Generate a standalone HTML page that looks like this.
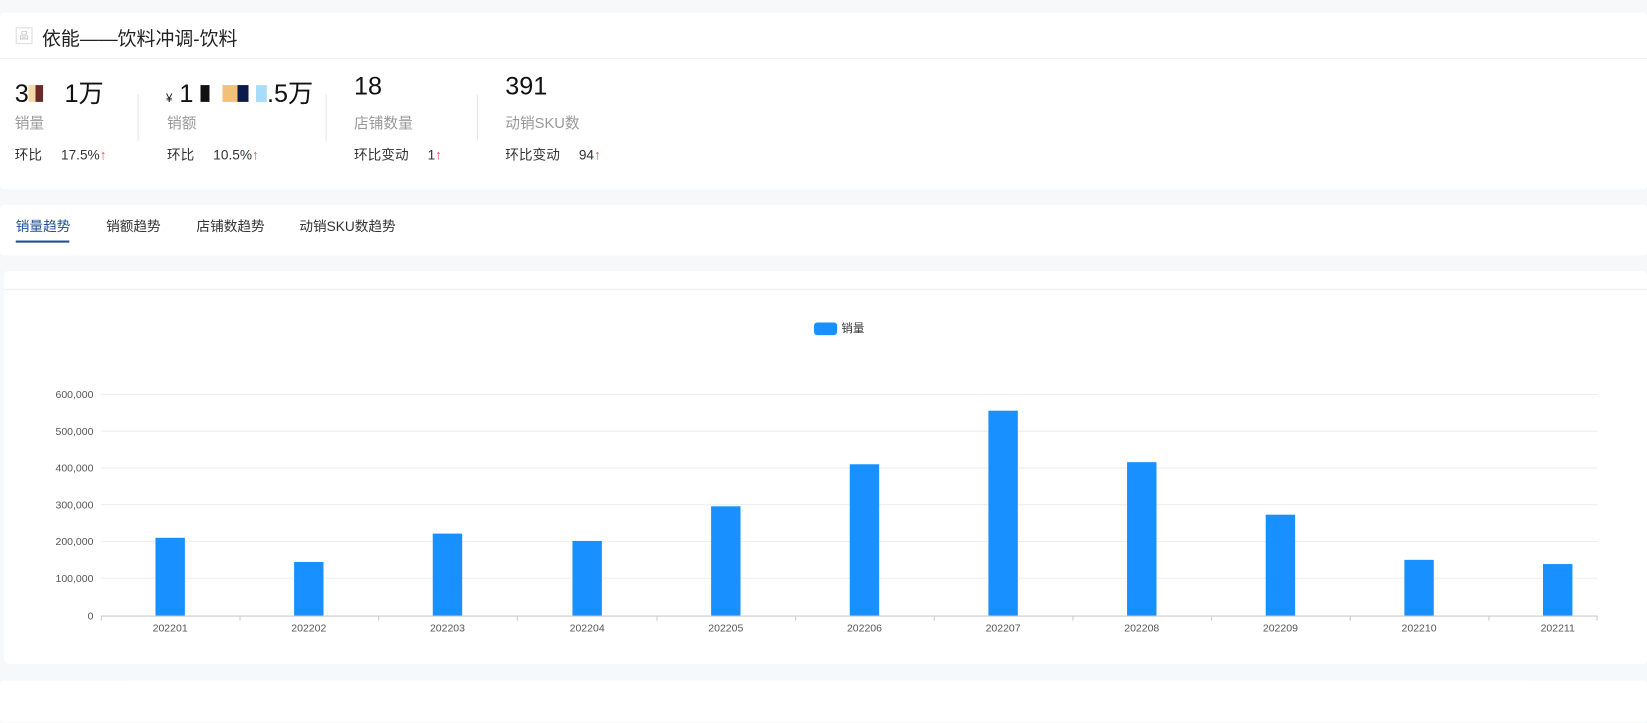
<!DOCTYPE html>
<html><head><meta charset="utf-8">
<style>
*{margin:0;padding:0;box-sizing:border-box}
html,body{width:1647px;height:683px;overflow:hidden}
body{background:#f7f8fa;font-family:"Liberation Sans","Noto Sans CJK SC",sans-serif;color:#333}
#w{position:absolute;left:0;top:0;width:1568px;height:651px;transform:scale(1.05038);transform-origin:0 0}
.a{position:absolute}
.card{position:absolute;background:#fff;left:0;right:0;border-radius:4px}
.big{font-size:24px;color:#111;top:69px}
.lbl{font-size:14px;color:#999;top:107px}
.hb{font-size:13px;color:#333;top:137px}
.up{color:#e05a5a}
.sep{position:absolute;top:90px;width:1px;height:44px;background:#e5e5e5}
.tab{font-size:13px;color:#333;top:205px}
</style></head><body><div id="w">
<div class="card" style="top:12px;height:168px">
  <div class="a" style="left:15px;top:14px;width:16px;height:16px;border:1px solid #ddd;font-size:9px;color:#bbb;text-align:center;line-height:14px">品</div>
  <div class="a" style="left:40px;top:11px;font-size:18px;color:#222">依能——饮料冲调-饮料</div>
  <div class="a" style="left:0;right:0;top:43px;height:1px;background:#eee"></div>
</div>
<div class="a big" style="left:14px">3<span style="display:inline-block;width:14px;height:16px;background:linear-gradient(90deg,#f3d9a8 50%,#6b2a2a 50%)"></span>&nbsp;&nbsp;&nbsp;1万</div>
<div class="a lbl" style="left:14px">销量</div>
<div class="a hb" style="left:14px">环比&nbsp;&nbsp;&nbsp;&nbsp;&nbsp;17.5%<span class="up">↑</span></div>
<div class="sep" style="left:131px"></div>
<div class="a big" style="left:158px"><span style="font-size:11px">¥</span> 1<span style="display:inline-block;width:70px;height:16px;background:linear-gradient(90deg,#fff 10%,#111 10%,#111 22%,#fff 22%,#fff 40%,#f3c07a 40%,#f3c07a 60%,#0a1a4a 60%,#0a1a4a 75%,#fff 75%,#fff 85%,#a8ddf8 85%)"></span>.5万</div>
<div class="a lbl" style="left:159px">销额</div>
<div class="a hb" style="left:159px">环比&nbsp;&nbsp;&nbsp;&nbsp;&nbsp;10.5%<span class="up">↑</span></div>
<div class="sep" style="left:310px"></div>
<div class="a big" style="left:337px">18</div>
<div class="a lbl" style="left:337px">店铺数量</div>
<div class="a hb" style="left:337px">环比变动&nbsp;&nbsp;&nbsp;&nbsp;&nbsp;1<span class="up">↑</span></div>
<div class="sep" style="left:454px"></div>
<div class="a big" style="left:481px">391</div>
<div class="a lbl" style="left:481px">动销SKU数</div>
<div class="a hb" style="left:481px">环比变动&nbsp;&nbsp;&nbsp;&nbsp;&nbsp;94<span class="up">↑</span></div>

<div class="card" style="top:195px;height:48px"></div>
<div class="a tab" style="left:15px;color:#1d4f91">销量趋势</div>
<div class="a" style="left:15px;top:229px;width:51px;height:2px;background:#1d4f91"></div>
<div class="a tab" style="left:101px">销额趋势</div>
<div class="a tab" style="left:187px">店铺数趋势</div>
<div class="a tab" style="left:285px">动销SKU数趋势</div>

<div class="card" style="top:258px;height:374px;left:4px">
  <div class="a" style="left:0;right:0;top:17px;height:1px;background:#eee"></div>
</div>
<div class="card" style="top:648px;height:40px"></div>
<svg class="a" style="left:0;top:0" width="1568" height="651" font-family="Liberation Sans, sans-serif">
  <rect x="775" y="307" width="22" height="12" rx="3" fill="#1890ff"/>
  <text x="801" y="316" font-size="11" fill="#333" font-family="Liberation Sans, Noto Sans CJK SC, sans-serif">销量</text>
  <g stroke="#eee" stroke-width="1">
    <line x1="96" x2="1521" y1="375.5" y2="375.5"/>
    <line x1="96" x2="1521" y1="410.5" y2="410.5"/>
    <line x1="96" x2="1521" y1="445.5" y2="445.5"/>
    <line x1="96" x2="1521" y1="480.5" y2="480.5"/>
    <line x1="96" x2="1521" y1="515.5" y2="515.5"/>
    <line x1="96" x2="1521" y1="550.5" y2="550.5"/>
  </g>
  <line x1="96" x2="1521" y1="586.5" y2="586.5" stroke="#ccc"/>
  <g font-size="10" fill="#555" text-anchor="end">
    <text x="89" y="379">600,000</text><text x="89" y="414">500,000</text><text x="89" y="449">400,000</text>
    <text x="89" y="484">300,000</text><text x="89" y="519">200,000</text><text x="89" y="554">100,000</text><text x="89" y="590">0</text>
  </g>
  <g fill="#1890ff">
    <rect x="148" y="512" width="28" height="74"/>
    <rect x="280" y="535" width="28" height="51"/>
    <rect x="412" y="508" width="28" height="78"/>
    <rect x="545" y="515" width="28" height="71"/>
    <rect x="677" y="482" width="28" height="104"/>
    <rect x="809" y="442" width="28" height="144"/>
    <rect x="941" y="391" width="28" height="195"/>
    <rect x="1073" y="440" width="28" height="146"/>
    <rect x="1205" y="490" width="28" height="96"/>
    <rect x="1337" y="533" width="28" height="53"/>
    <rect x="1469" y="537" width="28" height="49"/>
  </g>
  <g stroke="#ccc"><line x1="96.5" x2="96.5" y1="586" y2="591"/><line x1="228.5" x2="228.5" y1="586" y2="591"/><line x1="360.5" x2="360.5" y1="586" y2="591"/><line x1="492.5" x2="492.5" y1="586" y2="591"/><line x1="625.5" x2="625.5" y1="586" y2="591"/><line x1="757.5" x2="757.5" y1="586" y2="591"/><line x1="889.5" x2="889.5" y1="586" y2="591"/><line x1="1021.5" x2="1021.5" y1="586" y2="591"/><line x1="1153.5" x2="1153.5" y1="586" y2="591"/><line x1="1285.5" x2="1285.5" y1="586" y2="591"/><line x1="1417.5" x2="1417.5" y1="586" y2="591"/><line x1="1520.5" x2="1520.5" y1="586" y2="591"/></g>
  <g font-size="10" fill="#555" text-anchor="middle">
    <text x="162" y="601">202201</text><text x="294" y="601">202202</text><text x="426" y="601">202203</text><text x="559" y="601">202204</text><text x="691" y="601">202205</text><text x="823" y="601">202206</text><text x="955" y="601">202207</text><text x="1087" y="601">202208</text><text x="1219" y="601">202209</text><text x="1351" y="601">202210</text><text x="1483" y="601">202211</text>
  </g>
</svg>
</div></body></html>
